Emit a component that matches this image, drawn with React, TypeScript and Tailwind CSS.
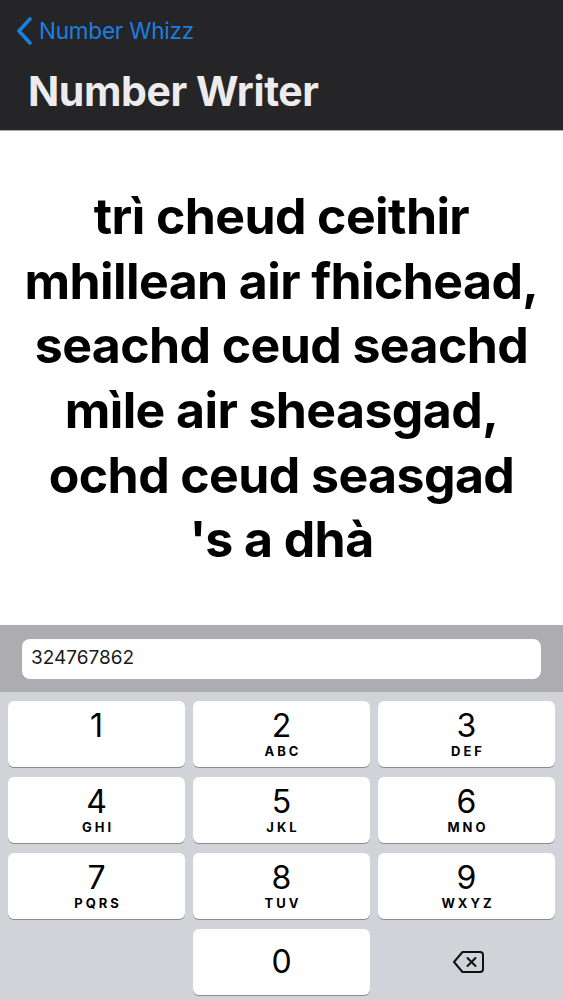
const KEYS: { digit: string; letters: string }[] = [
    { digit: '1', letters: '' },
    { digit: '2', letters: 'ABC' },
    { digit: '3', letters: 'DEF' },
    { digit: '4', letters: 'GHI' },
    { digit: '5', letters: 'JKL' },
    { digit: '6', letters: 'MNO' },
    { digit: '7', letters: 'PQRS' },
    { digit: '8', letters: 'TUV' },
    { digit: '9', letters: 'WXYZ' },
]

const WORDS = "trì cheud ceithir\nmhillean air fhichead,\nseachd ceud seachd\nmìle air sheasgad,\nochd ceud seasgad\n's a dhà"

function Key({ digit, letters }: { digit: string; letters: string }) {
    return (
        <button className="h-[66px] bg-white rounded-[6px] shadow-[0_1px_0_#898a8e] flex flex-col items-center pt-[7px]">
            <span className="text-[32px] leading-[36px] font-normal text-black">{digit}</span>
            <span className="text-[13px] leading-[15px] font-bold tracking-[3px] text-black pl-[3px]">{letters}</span>
        </button>
    )
}

export default function App() {
    return (
        <div className="w-[563px] h-[1000px] flex flex-col bg-white overflow-hidden font-['Inter','Liberation_Sans',sans-serif]">
            {/* nav bar */}
            <div className="h-[131px] shrink-0 bg-[#252427] border-b border-[#a9a9ab] flex flex-col">
                <div className="flex items-center pl-[16px] pt-[15px] h-[46px]">
                    <svg width="18" height="28" viewBox="0 0 18 28" className="shrink-0">
                        <path d="M14 2 L3 14 L14 26" fill="none" stroke="#1b7fe0" strokeWidth="3.6" strokeLinecap="round" strokeLinejoin="round" />
                    </svg>
                    <span className="ml-[5px] text-[22.5px] leading-[26px] text-[#1b7fe0] tracking-[-0.2px]">Number Whizz</span>
                </div>
                <h1 className="pl-[28px] mt-[22px] text-[41px] leading-[46px] font-bold text-[#ececee] tracking-[-0.4px]">Number Writer</h1>
            </div>

            {/* output */}
            <div className="h-[494px] shrink-0 flex items-center justify-center">
                <p className="text-center whitespace-pre-line text-[50px] leading-[64.6px] font-bold text-black tracking-[-0.6px]">{WORDS}</p>
            </div>

            {/* input bar */}
            <div className="h-[67px] shrink-0 bg-[#adacb0] flex items-center px-[22px]">
                <div className="w-full h-[40px] bg-white rounded-[8px] flex items-center px-[9px] text-[19px] text-[#1a1a1a]">
                    324767862
                </div>
            </div>

            {/* keypad */}
            <div className="flex-1 bg-[#d1d3d8] px-[8px] pt-[9px]">
                <div className="grid grid-cols-3 gap-x-[8px] gap-y-[10px]">
                    {KEYS.map(k => <Key key={k.digit} digit={k.digit} letters={k.letters} />)}
                    <div />
                    <button className="h-[66px] bg-white rounded-[6px] shadow-[0_1px_0_#898a8e] flex items-center justify-center">
                        <span className="text-[32px] leading-[36px] text-black">0</span>
                    </button>
                    <div className="h-[66px] flex items-center justify-center">
                        <svg width="33" height="24" viewBox="0 0 33 24" className="mt-[-1px] ml-[4px]">
                            <path d="M10.5 2 H28 a3 3 0 0 1 3 3 V19 a3 3 0 0 1 -3 3 H10.5 L2 12 Z" fill="none" stroke="#111" strokeWidth="2" strokeLinejoin="round" />
                            <path d="M15.5 8 L23.5 16 M23.5 8 L15.5 16" stroke="#111" strokeWidth="2" strokeLinecap="round" />
                        </svg>
                    </div>
                </div>
            </div>
        </div>
    )
}
